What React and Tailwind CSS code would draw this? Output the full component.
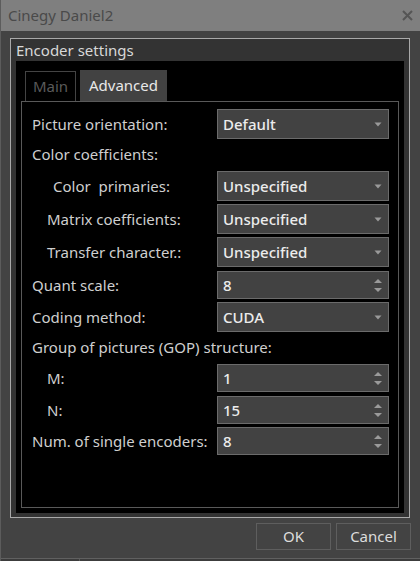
import React from 'react';

const font = { fontFamily: '"Segoe UI", "Noto Sans", "Open Sans", sans-serif' };

function DropArrow() {
  return (
    <svg width="8" height="5" viewBox="0 0 8 5" className="shrink-0">
      <path d="M0.5 0.5 L7.5 0.5 L4 4.5 Z" fill="#9a9a9a" />
    </svg>
  );
}

function SpinArrows() {
  return (
    <div className="flex flex-col items-center gap-[5px] shrink-0">
      <svg width="8" height="4" viewBox="0 0 8 4">
        <path d="M0 4 L8 4 L4 0 Z" fill="#9a9a9a" />
      </svg>
      <svg width="8" height="4" viewBox="0 0 8 4">
        <path d="M0 0 L8 0 L4 4 Z" fill="#9a9a9a" />
      </svg>
    </div>
  );
}

function Field({ value, kind, h = 'h-[30px]' }) {
  return (
    <div className={`w-[172px] ${h} flex items-center justify-between pl-[5px] pr-[6px] bg-[#424242] border border-[#6b6b6b] text-[15px] font-medium text-[#ececec]`}>
      <span>{value}</span>
      {kind === 'spin' ? <SpinArrows /> : <DropArrow />}
    </div>
  );
}

function Row({ label, indent = 'pl-0', value, kind, h, mt }) {
  return (
    <div className={`flex items-center justify-between ${mt}`}>
      <span className={`${indent} text-[15px] text-[#cfcfcf]`}>{label}</span>
      <Field value={value} kind={kind} h={h} />
    </div>
  );
}

export default function App() {
  return (
    <div className="w-[420px] h-[561px] bg-[#434343] flex flex-col border-l border-[#5c5c5c] overflow-hidden" style={font}>
      {/* title bar */}
      <div className="h-[31px] bg-[#7f7f7f] flex items-center justify-between pl-[7px] pr-[7px] shrink-0">
        <span className="text-[15px] text-[#4a4a4a]">Cinegy Daniel2</span>
        <svg width="11" height="11" viewBox="0 0 11 11">
          <path d="M1 1 L10 10 M10 1 L1 10" stroke="#555" strokeWidth="2" />
        </svg>
      </div>

      {/* group box */}
      <div className="mt-[7px] ml-[9px] w-[400px] h-[480px] border border-[#a9a9a9] bg-[#333333] flex flex-col px-[5px] pb-[4px]">
        <div className="h-[22px] flex items-center text-[15px] text-[#d8d8d8]">Encoder settings</div>
        <div className="flex-1 bg-black flex flex-col px-[5px] pb-[5px] pt-[9px]">
          {/* tabs */}
          <div className="flex items-end gap-[4px] pl-[4px] h-[31px]">
            <div className="h-[30px] w-[51px] border border-b-0 border-[#444] flex items-center justify-center text-[15px] text-[#5a5a5a]">Main</div>
            <div className="h-[31px] w-[87px] bg-[#424242] flex items-center justify-center text-[15px] text-[#e8e8e8]">Advanced</div>
          </div>
          {/* tab panel */}
          <div className="flex-1 border border-[#595959] flex flex-col pl-[10px] pr-[9px] pt-[7px]">
            <Row label="Picture orientation:" value="Default" kind="drop" mt="mt-0" />
            <div className="h-[31px] flex items-center text-[15px] text-[#cfcfcf]">Color coefficients:</div>
            <Row label="Color  primaries:" indent="pl-[21px] whitespace-pre" value="Unspecified" kind="drop" mt="mt-[1px]" />
            <Row label="Matrix coefficients:" indent="pl-[15px]" value="Unspecified" kind="drop" mt="mt-[3px]" />
            <Row label="Transfer character.:" indent="pl-[15px]" value="Unspecified" kind="drop" mt="mt-[3px]" />
            <Row label="Quant scale:" value="8" kind="spin" h="h-[28px]" mt="mt-[4px]" />
            <Row label="Coding method:" value="CUDA" kind="drop" mt="mt-[3px]" />
            <div className="h-[30px] flex items-center text-[15px] text-[#cfcfcf]">Group of pictures (GOP) structure:</div>
            <Row label="M:" indent="pl-[15px]" value="1" kind="spin" h="h-[28px]" mt="mt-[2px]" />
            <Row label="N:" indent="pl-[15px]" value="15" kind="spin" h="h-[28px]" mt="mt-[4px]" />
            <Row label="Num. of single encoders:" value="8" kind="spin" h="h-[28px]" mt="mt-[3px]" />
          </div>
        </div>
      </div>

      {/* buttons */}
      <div className="flex justify-end gap-[5px] pr-[9px] mt-[5px]">
        <button className="w-[75px] h-[27px] border border-[#5e5e5e] bg-[#434343] text-[15px] text-[#dcdcdc]">OK</button>
        <button className="w-[75px] h-[27px] border border-[#5e5e5e] bg-[#434343] text-[15px] text-[#dcdcdc]">Cancel</button>
      </div>

      <div className="mt-auto h-[3px] border-t border-[#606060] bg-[#3c3c3c] flex">
        <div className="w-[79px] border-r border-[#5a5a5a]" />
      </div>
    </div>
  );
}
